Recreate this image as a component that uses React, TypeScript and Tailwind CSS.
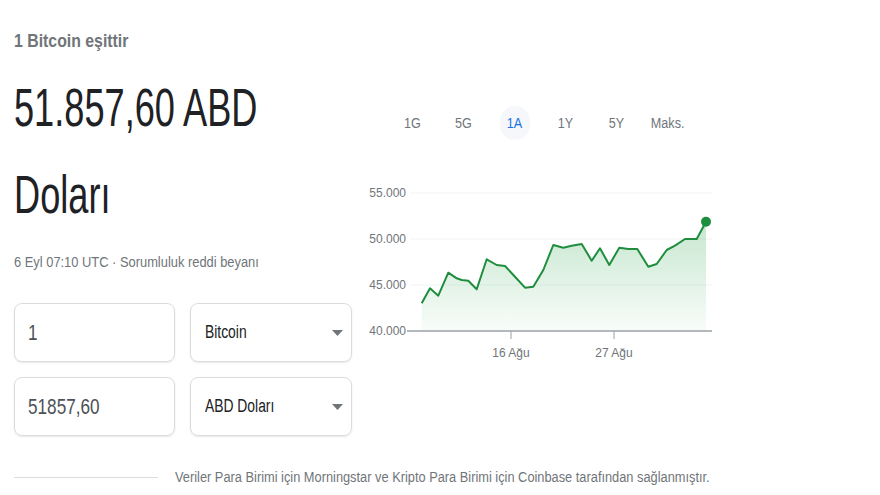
import React from "react";

// price points read off the chart (page coordinates)
const points: [number, number][] = [
  [421.7, 303.3], [430, 288.3], [438.3, 295.7], [448.3, 272.7], [456.7, 278.3],
  [461.7, 280], [468.3, 280.7], [476.7, 289.3], [486.7, 259.3], [496.7, 265],
  [505, 266], [515, 276.7], [525, 287.7], [533.3, 286.7], [543.3, 270],
  [553.3, 245], [563.3, 247.7], [571.7, 245.7], [581.7, 244], [591.7, 260.7],
  [600, 248.3], [609.3, 265], [619.3, 247.7], [628.3, 249], [637.3, 249],
  [648.3, 266.7], [656.7, 264], [666.7, 250], [675, 245.7], [685, 239],
  [696.7, 239], [706, 221.7],
];

const OX = 352;
const OY = 175;

function Chart() {
  const pts = points.map(([x, y]) => [x - OX, y - OY]);
  const line = pts.map(([x, y], i) => `${i ? "L" : "M"}${x} ${y}`).join(" ");
  const axisY = 331 - OY;
  const area = `${line} L${pts[pts.length - 1][0]} ${axisY} L${pts[0][0]} ${axisY} Z`;
  const grid = [
    { label: "55.000", y: 193 },
    { label: "50.000", y: 239 },
    { label: "45.000", y: 285 },
  ];
  const last = pts[pts.length - 1];
  return (
    <svg width="370" height="200" className="block" style={{ fontFamily: '"Liberation Sans", Arial, sans-serif' }}>
      <defs>
        <linearGradient id="fill" x1="0" y1="0" x2="0" y2="1">
          <stop offset="0%" stopColor="#34a853" stopOpacity="0.28" />
          <stop offset="100%" stopColor="#34a853" stopOpacity="0.03" />
        </linearGradient>
      </defs>
      {grid.map((g) => (
        <g key={g.label}>
          <line x1={410 - OX} x2={712 - OX} y1={g.y - OY} y2={g.y - OY} stroke="#f1f3f4" strokeWidth="1" />
          <text x={406 - OX} y={g.y - OY + 4} textAnchor="end" fontSize="12" fill="#70757a">
            {g.label}
          </text>
        </g>
      ))}
      <path d={area} fill="url(#fill)" />
      <path d={line} fill="none" stroke="#1e8e3e" strokeWidth="2" strokeLinejoin="round" />
      <circle cx={last[0]} cy={last[1]} r="5" fill="#1e8e3e" />
      <line x1={407 - OX} x2={712 - OX} y1={axisY} y2={axisY} stroke="#9aa0a6" strokeWidth="1.5" />
      <text x={406 - OX} y={axisY + 4} textAnchor="end" fontSize="12" fill="#70757a">
        40.000
      </text>
      {[
        { x: 511, label: "16 Ağu" },
        { x: 614, label: "27 Ağu" },
      ].map((t) => (
        <g key={t.label}>
          <line x1={t.x - OX} x2={t.x - OX} y1={axisY} y2={axisY + 8} stroke="#9aa0a6" strokeWidth="1" />
          <text x={t.x - OX} y={axisY + 26} textAnchor="middle" fontSize="12" fill="#70757a">
            {t.label}
          </text>
        </g>
      ))}
    </svg>
  );
}

function Caret() {
  return (
    <svg width="11" height="6" viewBox="0 0 11 6">
      <polygon points="0,0 11,0 5.5,6" fill="#70757a" />
    </svg>
  );
}

function App() {
  const tabs = ["1G", "5G", "1A", "1Y", "5Y", "Maks."];
  return (
    <div
      className="w-[880px] h-[495px] bg-white overflow-hidden flex flex-col"
      style={{ fontFamily: '"Liberation Sans", Arial, sans-serif' }}
    >
      <div className="flex">
        <div className="w-[352px] shrink-0 pl-[14px] pt-[29px]">
          <div className="text-[18px] leading-6 font-bold text-[#70757a] whitespace-nowrap">
            <span className="inline-block origin-left scale-x-[0.88]">1 Bitcoin eşittir</span>
          </div>
          <div className="mt-[11px] w-[480px] origin-left scale-x-[0.67] text-[54px] leading-[86.6px] text-[#202124]">
            51.857,60 ABD Doları
          </div>
          <div className="mt-[15px] text-[14px] leading-5 text-[#70757a] whitespace-nowrap">
            <span className="inline-block origin-left scale-x-[0.92]">6 Eyl 07:10 UTC · Sorumluluk reddi beyanı</span>
          </div>
          <div className="mt-[31px] flex flex-col gap-[15px]">
            {[
              { value: "1", unit: "Bitcoin" },
              { value: "51857,60", unit: "ABD Doları" },
            ].map((row) => (
              <div key={row.unit} className="flex gap-[15px]">
                <div className="w-[161px] h-[59px] rounded-lg border border-[#dadce0] shadow-[0_1px_2px_rgba(60,64,67,0.12)] flex items-center pl-[13px] text-[22px] text-[#4d5156]">
                  <span className="inline-block origin-left scale-x-[0.78] whitespace-nowrap">{row.value}</span>
                </div>
                <div className="w-[162px] h-[59px] rounded-lg border border-[#dadce0] shadow-[0_1px_2px_rgba(60,64,67,0.12)] flex items-center justify-between pl-[14px] pr-[8px] text-[18px] text-[#202124]">
                  <span className="inline-block origin-left scale-x-[0.77] whitespace-nowrap">{row.unit}</span>
                  <Caret />
                </div>
              </div>
            ))}
          </div>
        </div>
        <div className="flex-1 pt-[106px]">
          <div className="flex ml-[35px] h-[34px] items-center text-[14px] text-[#70757a]">
            {tabs.map((t) => (
              <div key={t} className="w-[51px] flex justify-center">
                <span
                  className={
                    t === "1A"
                      ? "h-[34px] w-[30px] rounded-full bg-[#f5f7fb] flex items-center justify-center text-[#1a73e8]"
                      : "flex items-center justify-center"
                  }
                >
                  <span className="inline-block scale-x-[0.9]">{t}</span>
                </span>
              </div>
            ))}
          </div>
          <div className="mt-[35px]">
            <Chart />
          </div>
        </div>
      </div>
      <div className="flex items-center mt-[31px] pl-[14px]">
        <div className="w-[144px] h-px bg-[#dadce0]" />
        <div className="ml-[17px] text-[14px] text-[#70757a] whitespace-nowrap">
          <span className="inline-block origin-left scale-x-[0.915]">
            Veriler Para Birimi için Morningstar ve Kripto Para Birimi için Coinbase tarafından sağlanmıştır.
          </span>
        </div>
      </div>
    </div>
  );
}

export default App;
